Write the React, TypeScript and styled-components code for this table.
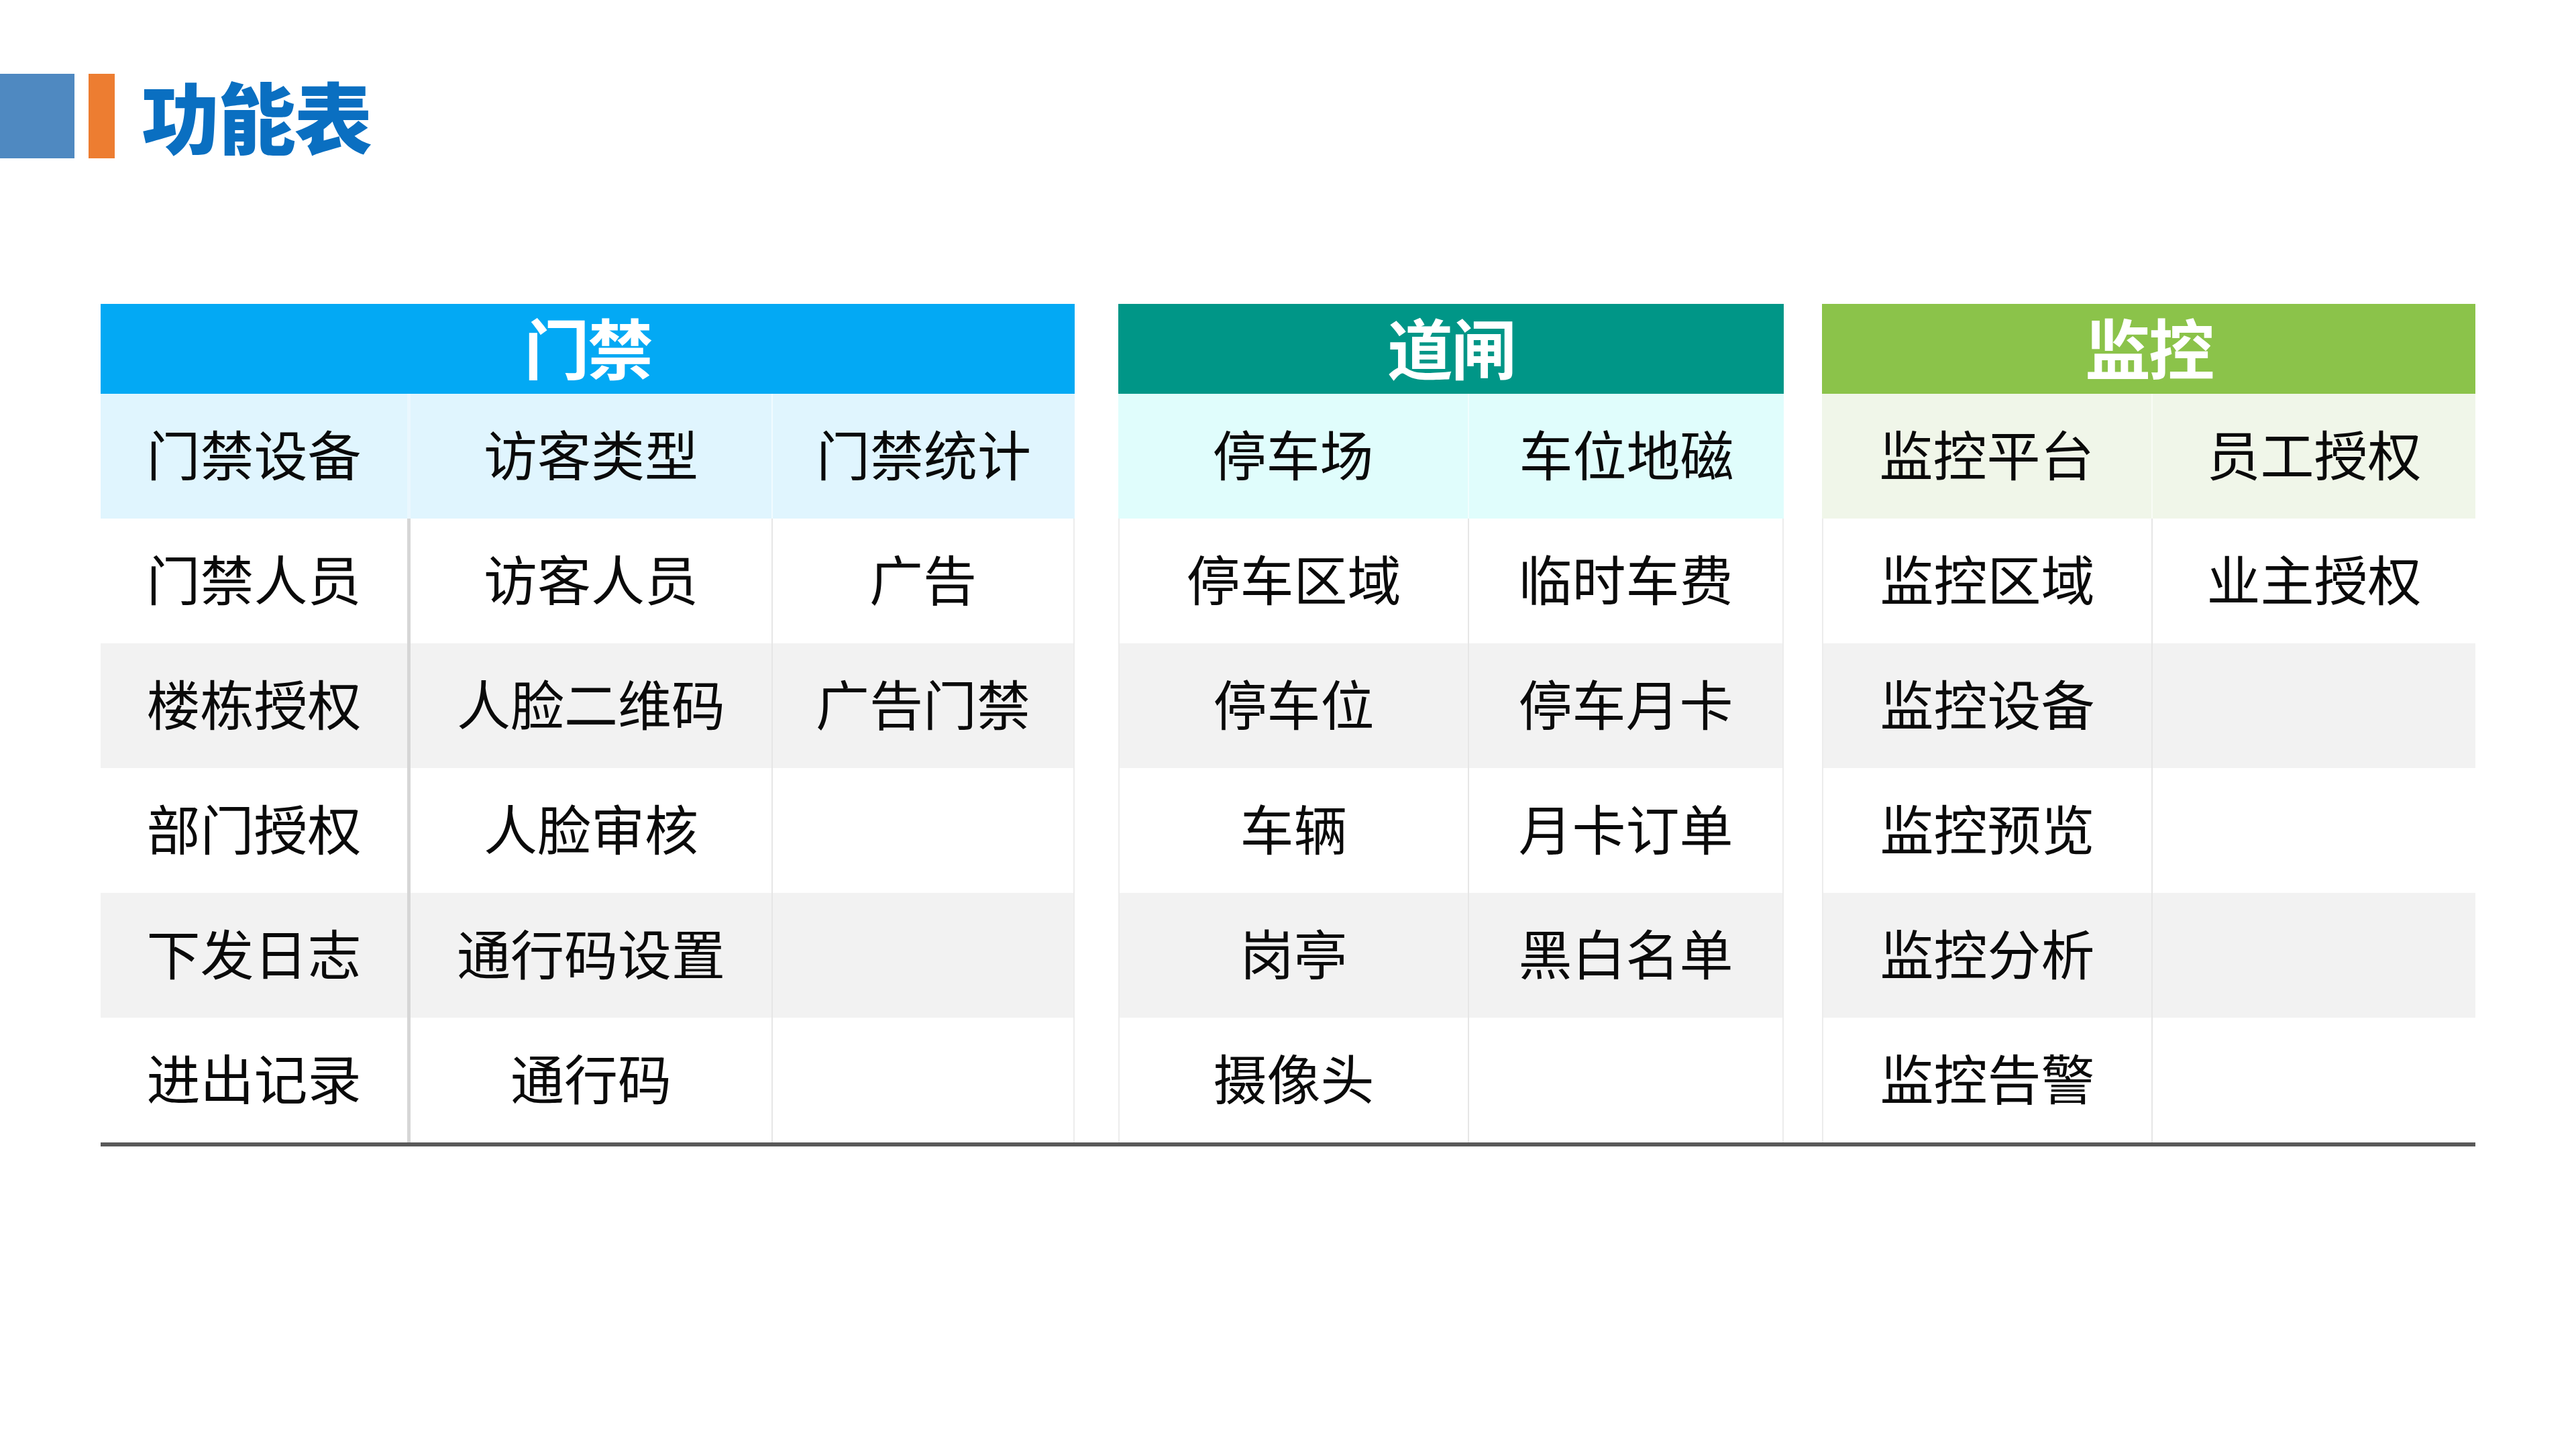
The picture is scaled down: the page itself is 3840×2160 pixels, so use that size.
import React from "react";
import styled, { createGlobalStyle } from "styled-components";

const GlobalStyle = createGlobalStyle`
  * { box-sizing: border-box; }
  html, body { margin: 0; padding: 0; background: #ffffff; }
  body { font-family: "Noto Sans CJK SC", "Noto Sans", sans-serif; }
`;

const Page = styled.div`
  width: 3840px;
  height: 2160px;
  background: #ffffff;
  padding-top: 110px;
  overflow: hidden;
`;

const TitleBar = styled.div`
  display: flex;
  align-items: center;
  height: 126px;
`;

const BlueBlock = styled.div`
  width: 111px;
  height: 126px;
  background: #4f89c1;
`;

const OrangeBlock = styled.div`
  width: 39px;
  height: 126px;
  margin-left: 21px;
  background: #ed7d31;
`;

const Title = styled.h1`
  margin: 0 0 0 40px;
  padding-bottom: 6px;
  font-family: "Noto Sans CJK SC", sans-serif;
  font-weight: 900;
  font-size: 116px;
  line-height: 120px;
  color: #0a6fc1;
  letter-spacing: -2px;
`;

const TableArea = styled.div`
  margin: 217px 0 0 150px;
  width: 3540px;
  display: flex;
  border-bottom: 6px solid #595959;
`;

const Gap = styled.div<{ $w: number }>`
  width: ${(p) => p.$w}px;
  flex: none;
`;

const Group = styled.div<{ $cols: string }>`
  display: grid;
  grid-template-columns: ${(p) => p.$cols};
  grid-template-rows: 134px;
  grid-auto-rows: 186px;
  flex: none;
`;

const Header = styled.div<{ $bg: string }>`
  grid-column: 1 / -1;
  background: ${(p) => p.$bg};
  color: #ffffff;
  font-family: "Noto Sans CJK SC", sans-serif;
  font-weight: 700;
  font-size: 98px;
  line-height: 124px;
  padding-bottom: 10px;
  text-align: center;
  letter-spacing: -3px;
`;

type Divider = "none" | "strong" | "light" | "edge";

const dividerCss = (d: Divider, tinted: boolean) => {
  if (d === "none") return "none";
  if (d === "strong") return `5px solid ${tinted ? "#eaf7fe" : "#d6d6d6"}`;
  if (d === "edge") return `2px solid ${tinted ? "rgba(255,255,255,0.55)" : "#ececec"}`;
  return `2px solid ${tinted ? "rgba(255,255,255,0.55)" : "#e6e6e6"}`;
};

const Cell = styled.div<{ $bg: string; $left: Divider; $right: Divider; $tinted: boolean }>`
  display: flex;
  align-items: center;
  justify-content: center;
  padding-bottom: 12px;
  background: ${(p) => p.$bg};
  font-family: "Noto Sans CJK SC", sans-serif;
  font-weight: 400;
  font-size: 80px;
  color: #0a0a0a;
  white-space: nowrap;
  border-left: ${(p) => dividerCss(p.$left, p.$tinted)};
  border-right: ${(p) => dividerCss(p.$right, p.$tinted)};
`;

type GroupData = {
  title: string;
  headerBg: string;
  tint: string;
  cols: number[];
  strongFirst?: boolean;
  edgeL?: boolean;
  edgeR?: boolean;
  rows: string[][];
};

const groups: GroupData[] = [
  {
    title: "门禁",
    headerBg: "#03a9f4",
    tint: "#e0f5fe",
    cols: [457, 543, 452],
    strongFirst: true,
    edgeR: true,
    rows: [
      ["门禁设备", "访客类型", "门禁统计"],
      ["门禁人员", "访客人员", "广告"],
      ["楼栋授权", "人脸二维码", "广告门禁"],
      ["部门授权", "人脸审核", ""],
      ["下发日志", "通行码设置", ""],
      ["进出记录", "通行码", ""],
    ],
  },
  {
    title: "道闸",
    headerBg: "#009687",
    tint: "#e0fdfc",
    cols: [521, 471],
    edgeL: true,
    edgeR: true,
    rows: [
      ["停车场", "车位地磁"],
      ["停车区域", "临时车费"],
      ["停车位", "停车月卡"],
      ["车辆", "月卡订单"],
      ["岗亭", "黑白名单"],
      ["摄像头", ""],
    ],
  },
  {
    title: "监控",
    headerBg: "#8bc34a",
    tint: "#f0f6e9",
    cols: [491, 483],
    edgeL: true,
    rows: [
      ["监控平台", "员工授权"],
      ["监控区域", "业主授权"],
      ["监控设备", ""],
      ["监控预览", ""],
      ["监控分析", ""],
      ["监控告警", ""],
    ],
  },
];

const rowBg = (i: number, tint: string) => {
  if (i === 0) return tint;
  return i % 2 === 0 ? "#f2f2f2" : "#ffffff";
};

const FeatureGroup: React.FC<{ g: GroupData }> = ({ g }) => (
  <Group $cols={g.cols.map((c) => `${c}px`).join(" ")}>
    <Header $bg={g.headerBg}>{g.title}</Header>
    {g.rows.map((row, ri) =>
      row.map((text, ci) => {
        const last = ci === row.length - 1;
        const left: Divider =
          ci === 0 ? (g.edgeL && ri > 0 ? "edge" : "none") : ci === 1 && g.strongFirst ? "strong" : "light";
        const right: Divider = last && g.edgeR && ri > 0 ? "edge" : "none";
        return (
          <Cell key={`${ri}-${ci}`} $bg={rowBg(ri, g.tint)} $tinted={ri === 0} $left={left} $right={right}>
            {text}
          </Cell>
        );
      })
    )}
  </Group>
);

export default function App() {
  return (
    <>
      <GlobalStyle />
      <Page>
        <TitleBar>
          <BlueBlock />
          <OrangeBlock />
          <Title>功能表</Title>
        </TitleBar>
        <TableArea>
          <FeatureGroup g={groups[0]} />
          <Gap $w={65} />
          <FeatureGroup g={groups[1]} />
          <Gap $w={57} />
          <FeatureGroup g={groups[2]} />
        </TableArea>
      </Page>
    </>
  );
}
